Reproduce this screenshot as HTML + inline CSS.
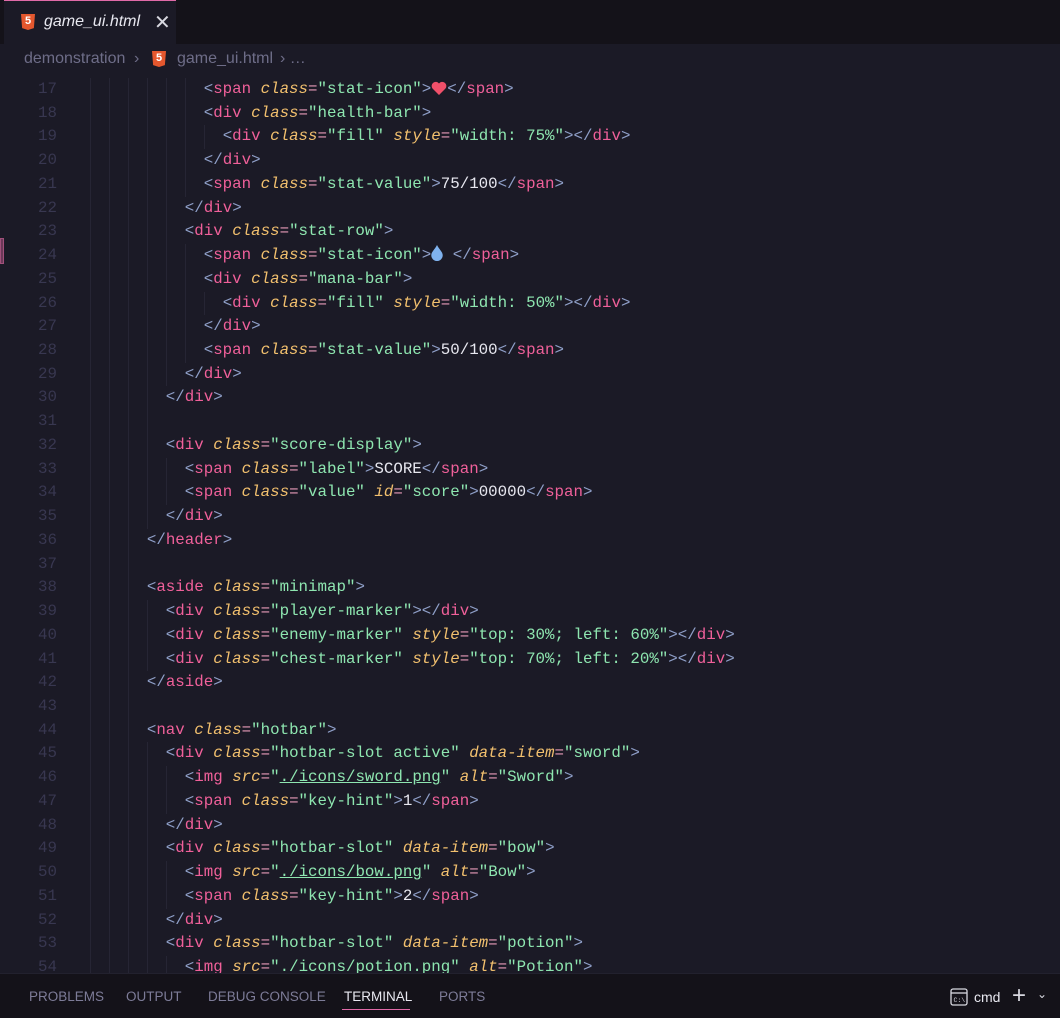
<!DOCTYPE html>
<html><head><meta charset="utf-8"><style>
*{margin:0;padding:0;box-sizing:border-box}
body{width:1060px;height:1018px;overflow:hidden;background:#1b1a26;font-family:"Liberation Sans",sans-serif;position:relative}
.tabbar{position:absolute;left:0;top:0;width:1060px;height:44px;background:#141219}
.tab{position:absolute;left:4px;top:0;width:172px;height:44px;background:#1b1a26;border-top:1px solid #e06aa8}
.tab .name{position:absolute;left:40px;top:12px;font-size:16px;font-style:italic;color:#e8e8f0}
.tab .x{position:absolute;left:150px;top:9px;font-size:20px;color:#d8d8e0}
.h5{position:absolute;width:14px;height:16px;background:#e4572e;color:#fff;font-size:11px;font-weight:bold;text-align:center;line-height:15px;clip-path:polygon(0 0,100% 0,92% 88%,50% 100%,8% 88%)}
.crumb{position:absolute;left:0;top:44px;width:1060px;height:30px;background:#1b1a26;color:#6e6d88;font-size:16px}
.crumb span{position:absolute;top:6px}
.code{position:absolute;left:0;top:78px;width:1060px;height:895px;overflow:hidden}
.ln{position:absolute;left:0;width:1060px;height:23.73px;font-family:"Liberation Mono",monospace;font-size:15.8px;line-height:23.73px;white-space:pre;color:#e8e8f0}
.ln .n{position:absolute;left:0;width:57px;text-align:right;color:#383750}
.ln .c{position:absolute;left:71px}
.g{position:absolute;top:0;width:1px;height:23.73px;background:#262534}
.p{color:#8f9fc8}.t{color:#f0609a}.a{color:#f2c06e;font-style:italic}.s{color:#8ee6b0}.e{color:#e79ab8}.u{text-decoration:underline;text-decoration-color:#8ee6b0}
.panel{position:absolute;left:0;top:973px;width:1060px;height:45px;background:#141219;border-top:1px solid #22212e;color:#7d7c98;font-size:13.5px}
.panel span{position:absolute;top:15px}
.marker{position:absolute;left:0;top:238px;width:4px;height:26px;background:#6b3858;border:1px solid #a0507a}
</style></head><body>
<div class="tabbar"><div class="tab"><div class="h5" style="left:17px;top:13px">5</div><span class="name">game_ui.html</span><span class="x">✕</span></div></div>
<div class="crumb"><span style="left:24px">demonstration</span><span style="left:134px">›</span><div class="h5" style="left:152px;top:7px">5</div><span style="left:177px">game_ui.html</span><span style="left:280px">› …</span></div>
<div class="marker"></div>
<div class="code">
<div class="ln" style="top:0px"><span class="n">17</span><i class="g" style="left:90px"></i><i class="g" style="left:109px"></i><i class="g" style="left:128px"></i><i class="g" style="left:147px"></i><i class="g" style="left:166px"></i><i class="g" style="left:185px"></i><span class="c">              <span class="p">&lt;</span><span class="t">span</span> <span class="a">class</span><span class="e">=</span><span class="s">"stat-icon"</span><span class="p">&gt;</span><svg width="16" height="14" viewBox="0 0 16 14" style="vertical-align:-2px"><path d="M8 14L1.5 7.5A4 4 0 0 1 8 2.5A4 4 0 0 1 14.5 7.5z" fill="#f0506a"/></svg><span class="p">&lt;/</span><span class="t">span</span><span class="p">&gt;</span></span></div>
<div class="ln" style="top:23.73px"><span class="n">18</span><i class="g" style="left:90px"></i><i class="g" style="left:109px"></i><i class="g" style="left:128px"></i><i class="g" style="left:147px"></i><i class="g" style="left:166px"></i><i class="g" style="left:185px"></i><span class="c">              <span class="p">&lt;</span><span class="t">div</span> <span class="a">class</span><span class="e">=</span><span class="s">"health-bar"</span><span class="p">&gt;</span></span></div>
<div class="ln" style="top:47.46px"><span class="n">19</span><i class="g" style="left:90px"></i><i class="g" style="left:109px"></i><i class="g" style="left:128px"></i><i class="g" style="left:147px"></i><i class="g" style="left:166px"></i><i class="g" style="left:185px"></i><i class="g" style="left:204px"></i><span class="c">                <span class="p">&lt;</span><span class="t">div</span> <span class="a">class</span><span class="e">=</span><span class="s">"fill"</span> <span class="a">style</span><span class="e">=</span><span class="s">"width: 75%"</span><span class="p">&gt;&lt;/</span><span class="t">div</span><span class="p">&gt;</span></span></div>
<div class="ln" style="top:71.19px"><span class="n">20</span><i class="g" style="left:90px"></i><i class="g" style="left:109px"></i><i class="g" style="left:128px"></i><i class="g" style="left:147px"></i><i class="g" style="left:166px"></i><i class="g" style="left:185px"></i><span class="c">              <span class="p">&lt;/</span><span class="t">div</span><span class="p">&gt;</span></span></div>
<div class="ln" style="top:94.92px"><span class="n">21</span><i class="g" style="left:90px"></i><i class="g" style="left:109px"></i><i class="g" style="left:128px"></i><i class="g" style="left:147px"></i><i class="g" style="left:166px"></i><i class="g" style="left:185px"></i><span class="c">              <span class="p">&lt;</span><span class="t">span</span> <span class="a">class</span><span class="e">=</span><span class="s">"stat-value"</span><span class="p">&gt;</span>75/100<span class="p">&lt;/</span><span class="t">span</span><span class="p">&gt;</span></span></div>
<div class="ln" style="top:118.65px"><span class="n">22</span><i class="g" style="left:90px"></i><i class="g" style="left:109px"></i><i class="g" style="left:128px"></i><i class="g" style="left:147px"></i><i class="g" style="left:166px"></i><span class="c">            <span class="p">&lt;/</span><span class="t">div</span><span class="p">&gt;</span></span></div>
<div class="ln" style="top:142.38px"><span class="n">23</span><i class="g" style="left:90px"></i><i class="g" style="left:109px"></i><i class="g" style="left:128px"></i><i class="g" style="left:147px"></i><i class="g" style="left:166px"></i><span class="c">            <span class="p">&lt;</span><span class="t">div</span> <span class="a">class</span><span class="e">=</span><span class="s">"stat-row"</span><span class="p">&gt;</span></span></div>
<div class="ln" style="top:166.11px"><span class="n">24</span><i class="g" style="left:90px"></i><i class="g" style="left:109px"></i><i class="g" style="left:128px"></i><i class="g" style="left:147px"></i><i class="g" style="left:166px"></i><i class="g" style="left:185px"></i><span class="c">              <span class="p">&lt;</span><span class="t">span</span> <span class="a">class</span><span class="e">=</span><span class="s">"stat-icon"</span><span class="p">&gt;</span><svg width="12" height="16" viewBox="0 0 10 14" style="vertical-align:-2px"><path d="M5 0C3 4 0 6 0 9a5 5 0 0 0 10 0C10 6 7 4 5 0z" fill="#7fb2ee"/></svg> <span class="p">&lt;/</span><span class="t">span</span><span class="p">&gt;</span></span></div>
<div class="ln" style="top:189.84px"><span class="n">25</span><i class="g" style="left:90px"></i><i class="g" style="left:109px"></i><i class="g" style="left:128px"></i><i class="g" style="left:147px"></i><i class="g" style="left:166px"></i><i class="g" style="left:185px"></i><span class="c">              <span class="p">&lt;</span><span class="t">div</span> <span class="a">class</span><span class="e">=</span><span class="s">"mana-bar"</span><span class="p">&gt;</span></span></div>
<div class="ln" style="top:213.57px"><span class="n">26</span><i class="g" style="left:90px"></i><i class="g" style="left:109px"></i><i class="g" style="left:128px"></i><i class="g" style="left:147px"></i><i class="g" style="left:166px"></i><i class="g" style="left:185px"></i><i class="g" style="left:204px"></i><span class="c">                <span class="p">&lt;</span><span class="t">div</span> <span class="a">class</span><span class="e">=</span><span class="s">"fill"</span> <span class="a">style</span><span class="e">=</span><span class="s">"width: 50%"</span><span class="p">&gt;&lt;/</span><span class="t">div</span><span class="p">&gt;</span></span></div>
<div class="ln" style="top:237.3px"><span class="n">27</span><i class="g" style="left:90px"></i><i class="g" style="left:109px"></i><i class="g" style="left:128px"></i><i class="g" style="left:147px"></i><i class="g" style="left:166px"></i><i class="g" style="left:185px"></i><span class="c">              <span class="p">&lt;/</span><span class="t">div</span><span class="p">&gt;</span></span></div>
<div class="ln" style="top:261.03px"><span class="n">28</span><i class="g" style="left:90px"></i><i class="g" style="left:109px"></i><i class="g" style="left:128px"></i><i class="g" style="left:147px"></i><i class="g" style="left:166px"></i><i class="g" style="left:185px"></i><span class="c">              <span class="p">&lt;</span><span class="t">span</span> <span class="a">class</span><span class="e">=</span><span class="s">"stat-value"</span><span class="p">&gt;</span>50/100<span class="p">&lt;/</span><span class="t">span</span><span class="p">&gt;</span></span></div>
<div class="ln" style="top:284.76px"><span class="n">29</span><i class="g" style="left:90px"></i><i class="g" style="left:109px"></i><i class="g" style="left:128px"></i><i class="g" style="left:147px"></i><i class="g" style="left:166px"></i><span class="c">            <span class="p">&lt;/</span><span class="t">div</span><span class="p">&gt;</span></span></div>
<div class="ln" style="top:308.49px"><span class="n">30</span><i class="g" style="left:90px"></i><i class="g" style="left:109px"></i><i class="g" style="left:128px"></i><i class="g" style="left:147px"></i><span class="c">          <span class="p">&lt;/</span><span class="t">div</span><span class="p">&gt;</span></span></div>
<div class="ln" style="top:332.22px"><span class="n">31</span><i class="g" style="left:90px"></i><i class="g" style="left:109px"></i><i class="g" style="left:128px"></i><i class="g" style="left:147px"></i></div>
<div class="ln" style="top:355.95px"><span class="n">32</span><i class="g" style="left:90px"></i><i class="g" style="left:109px"></i><i class="g" style="left:128px"></i><i class="g" style="left:147px"></i><span class="c">          <span class="p">&lt;</span><span class="t">div</span> <span class="a">class</span><span class="e">=</span><span class="s">"score-display"</span><span class="p">&gt;</span></span></div>
<div class="ln" style="top:379.68px"><span class="n">33</span><i class="g" style="left:90px"></i><i class="g" style="left:109px"></i><i class="g" style="left:128px"></i><i class="g" style="left:147px"></i><i class="g" style="left:166px"></i><span class="c">            <span class="p">&lt;</span><span class="t">span</span> <span class="a">class</span><span class="e">=</span><span class="s">"label"</span><span class="p">&gt;</span>SCORE<span class="p">&lt;/</span><span class="t">span</span><span class="p">&gt;</span></span></div>
<div class="ln" style="top:403.41px"><span class="n">34</span><i class="g" style="left:90px"></i><i class="g" style="left:109px"></i><i class="g" style="left:128px"></i><i class="g" style="left:147px"></i><i class="g" style="left:166px"></i><span class="c">            <span class="p">&lt;</span><span class="t">span</span> <span class="a">class</span><span class="e">=</span><span class="s">"value"</span> <span class="a">id</span><span class="e">=</span><span class="s">"score"</span><span class="p">&gt;</span>00000<span class="p">&lt;/</span><span class="t">span</span><span class="p">&gt;</span></span></div>
<div class="ln" style="top:427.14px"><span class="n">35</span><i class="g" style="left:90px"></i><i class="g" style="left:109px"></i><i class="g" style="left:128px"></i><i class="g" style="left:147px"></i><span class="c">          <span class="p">&lt;/</span><span class="t">div</span><span class="p">&gt;</span></span></div>
<div class="ln" style="top:450.87px"><span class="n">36</span><i class="g" style="left:90px"></i><i class="g" style="left:109px"></i><i class="g" style="left:128px"></i><span class="c">        <span class="p">&lt;/</span><span class="t">header</span><span class="p">&gt;</span></span></div>
<div class="ln" style="top:474.6px"><span class="n">37</span><i class="g" style="left:90px"></i><i class="g" style="left:109px"></i><i class="g" style="left:128px"></i></div>
<div class="ln" style="top:498.33px"><span class="n">38</span><i class="g" style="left:90px"></i><i class="g" style="left:109px"></i><i class="g" style="left:128px"></i><span class="c">        <span class="p">&lt;</span><span class="t">aside</span> <span class="a">class</span><span class="e">=</span><span class="s">"minimap"</span><span class="p">&gt;</span></span></div>
<div class="ln" style="top:522.06px"><span class="n">39</span><i class="g" style="left:90px"></i><i class="g" style="left:109px"></i><i class="g" style="left:128px"></i><i class="g" style="left:147px"></i><span class="c">          <span class="p">&lt;</span><span class="t">div</span> <span class="a">class</span><span class="e">=</span><span class="s">"player-marker"</span><span class="p">&gt;&lt;/</span><span class="t">div</span><span class="p">&gt;</span></span></div>
<div class="ln" style="top:545.79px"><span class="n">40</span><i class="g" style="left:90px"></i><i class="g" style="left:109px"></i><i class="g" style="left:128px"></i><i class="g" style="left:147px"></i><span class="c">          <span class="p">&lt;</span><span class="t">div</span> <span class="a">class</span><span class="e">=</span><span class="s">"enemy-marker"</span> <span class="a">style</span><span class="e">=</span><span class="s">"top: 30%; left: 60%"</span><span class="p">&gt;&lt;/</span><span class="t">div</span><span class="p">&gt;</span></span></div>
<div class="ln" style="top:569.52px"><span class="n">41</span><i class="g" style="left:90px"></i><i class="g" style="left:109px"></i><i class="g" style="left:128px"></i><i class="g" style="left:147px"></i><span class="c">          <span class="p">&lt;</span><span class="t">div</span> <span class="a">class</span><span class="e">=</span><span class="s">"chest-marker"</span> <span class="a">style</span><span class="e">=</span><span class="s">"top: 70%; left: 20%"</span><span class="p">&gt;&lt;/</span><span class="t">div</span><span class="p">&gt;</span></span></div>
<div class="ln" style="top:593.25px"><span class="n">42</span><i class="g" style="left:90px"></i><i class="g" style="left:109px"></i><i class="g" style="left:128px"></i><span class="c">        <span class="p">&lt;/</span><span class="t">aside</span><span class="p">&gt;</span></span></div>
<div class="ln" style="top:616.98px"><span class="n">43</span><i class="g" style="left:90px"></i><i class="g" style="left:109px"></i><i class="g" style="left:128px"></i></div>
<div class="ln" style="top:640.71px"><span class="n">44</span><i class="g" style="left:90px"></i><i class="g" style="left:109px"></i><i class="g" style="left:128px"></i><span class="c">        <span class="p">&lt;</span><span class="t">nav</span> <span class="a">class</span><span class="e">=</span><span class="s">"hotbar"</span><span class="p">&gt;</span></span></div>
<div class="ln" style="top:664.44px"><span class="n">45</span><i class="g" style="left:90px"></i><i class="g" style="left:109px"></i><i class="g" style="left:128px"></i><i class="g" style="left:147px"></i><span class="c">          <span class="p">&lt;</span><span class="t">div</span> <span class="a">class</span><span class="e">=</span><span class="s">"hotbar-slot active"</span> <span class="a">data-item</span><span class="e">=</span><span class="s">"sword"</span><span class="p">&gt;</span></span></div>
<div class="ln" style="top:688.17px"><span class="n">46</span><i class="g" style="left:90px"></i><i class="g" style="left:109px"></i><i class="g" style="left:128px"></i><i class="g" style="left:147px"></i><i class="g" style="left:166px"></i><span class="c">            <span class="p">&lt;</span><span class="t">img</span> <span class="a">src</span><span class="e">=</span><span class="s">"<span class="u">./icons/sword.png</span>"</span> <span class="a">alt</span><span class="e">=</span><span class="s">"Sword"</span><span class="p">&gt;</span></span></div>
<div class="ln" style="top:711.9px"><span class="n">47</span><i class="g" style="left:90px"></i><i class="g" style="left:109px"></i><i class="g" style="left:128px"></i><i class="g" style="left:147px"></i><i class="g" style="left:166px"></i><span class="c">            <span class="p">&lt;</span><span class="t">span</span> <span class="a">class</span><span class="e">=</span><span class="s">"key-hint"</span><span class="p">&gt;</span>1<span class="p">&lt;/</span><span class="t">span</span><span class="p">&gt;</span></span></div>
<div class="ln" style="top:735.63px"><span class="n">48</span><i class="g" style="left:90px"></i><i class="g" style="left:109px"></i><i class="g" style="left:128px"></i><i class="g" style="left:147px"></i><span class="c">          <span class="p">&lt;/</span><span class="t">div</span><span class="p">&gt;</span></span></div>
<div class="ln" style="top:759.36px"><span class="n">49</span><i class="g" style="left:90px"></i><i class="g" style="left:109px"></i><i class="g" style="left:128px"></i><i class="g" style="left:147px"></i><span class="c">          <span class="p">&lt;</span><span class="t">div</span> <span class="a">class</span><span class="e">=</span><span class="s">"hotbar-slot"</span> <span class="a">data-item</span><span class="e">=</span><span class="s">"bow"</span><span class="p">&gt;</span></span></div>
<div class="ln" style="top:783.09px"><span class="n">50</span><i class="g" style="left:90px"></i><i class="g" style="left:109px"></i><i class="g" style="left:128px"></i><i class="g" style="left:147px"></i><i class="g" style="left:166px"></i><span class="c">            <span class="p">&lt;</span><span class="t">img</span> <span class="a">src</span><span class="e">=</span><span class="s">"<span class="u">./icons/bow.png</span>"</span> <span class="a">alt</span><span class="e">=</span><span class="s">"Bow"</span><span class="p">&gt;</span></span></div>
<div class="ln" style="top:806.82px"><span class="n">51</span><i class="g" style="left:90px"></i><i class="g" style="left:109px"></i><i class="g" style="left:128px"></i><i class="g" style="left:147px"></i><i class="g" style="left:166px"></i><span class="c">            <span class="p">&lt;</span><span class="t">span</span> <span class="a">class</span><span class="e">=</span><span class="s">"key-hint"</span><span class="p">&gt;</span>2<span class="p">&lt;/</span><span class="t">span</span><span class="p">&gt;</span></span></div>
<div class="ln" style="top:830.55px"><span class="n">52</span><i class="g" style="left:90px"></i><i class="g" style="left:109px"></i><i class="g" style="left:128px"></i><i class="g" style="left:147px"></i><span class="c">          <span class="p">&lt;/</span><span class="t">div</span><span class="p">&gt;</span></span></div>
<div class="ln" style="top:854.28px"><span class="n">53</span><i class="g" style="left:90px"></i><i class="g" style="left:109px"></i><i class="g" style="left:128px"></i><i class="g" style="left:147px"></i><span class="c">          <span class="p">&lt;</span><span class="t">div</span> <span class="a">class</span><span class="e">=</span><span class="s">"hotbar-slot"</span> <span class="a">data-item</span><span class="e">=</span><span class="s">"potion"</span><span class="p">&gt;</span></span></div>
<div class="ln" style="top:878.01px"><span class="n">54</span><i class="g" style="left:90px"></i><i class="g" style="left:109px"></i><i class="g" style="left:128px"></i><i class="g" style="left:147px"></i><i class="g" style="left:166px"></i><span class="c">            <span class="p">&lt;</span><span class="t">img</span> <span class="a">src</span><span class="e">=</span><span class="s">"./icons/potion.png"</span> <span class="a">alt</span><span class="e">=</span><span class="s">"Potion"</span><span class="p">&gt;</span></span></div>
</div>
<div class="panel">
<span style="left:29px">PROBLEMS</span><span style="left:126px">OUTPUT</span><span style="left:208px">DEBUG CONSOLE</span><span style="left:344px;color:#e8e8f0">TERMINAL</span><div style="position:absolute;left:342px;top:35px;width:68px;height:1px;background:#e06aa8"></div><span style="left:439px">PORTS</span>
<svg style="position:absolute;left:950px;top:14px" width="18" height="18" viewBox="0 0 18 18"><rect x="1" y="1" width="16" height="16" rx="2" fill="none" stroke="#d8d8e0" stroke-width="1.3"/><line x1="1" y1="5" x2="17" y2="5" stroke="#d8d8e0" stroke-width="1.3"/><text x="3.5" y="14" font-size="6.5" fill="#d8d8e0" font-family="Liberation Mono">C:\</text></svg>
<span style="left:974px;color:#e8e8f0;font-size:14px">cmd</span>
<span style="left:1012px;top:8px;color:#d8d8e0;font-size:24px;font-weight:300">+</span>
<span style="left:1037px;top:13px;color:#d8d8e0;font-size:12px">⌄</span>
</div>
</body></html>
